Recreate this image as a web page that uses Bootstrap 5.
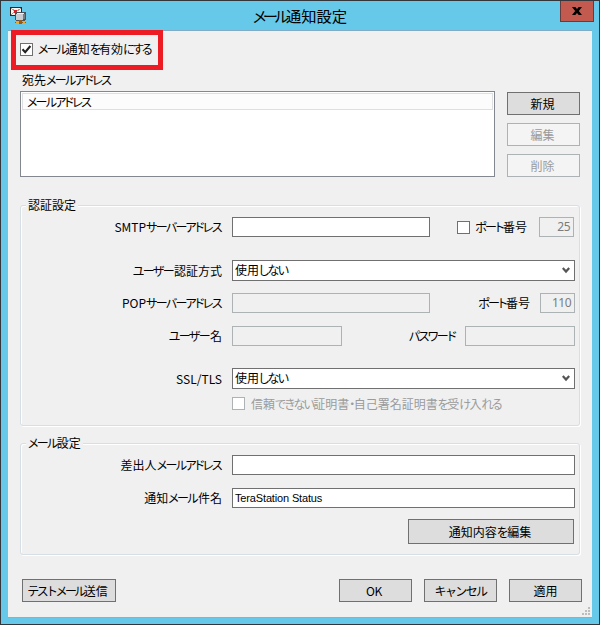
<!DOCTYPE html>
<html lang="ja">
<head>
<meta charset="utf-8">
<meta name="viewport" content="width=device-width, initial-scale=1">
<title>メール通知設定</title>
<link href="https://cdn.jsdelivr.net/npm/bootstrap@5.3.0/dist/css/bootstrap.min.css" rel="stylesheet">
<style>
body{width:600px;height:625px;overflow:hidden;font:12px/16px "Noto Sans CJK JP",sans-serif;color:#000;font-feature-settings:"palt";white-space:nowrap}
.win{width:600px;height:625px;background:#66c9e9;border:1px solid #33363b;padding:0 7px 7px}
.titlebar{height:29px;font-size:15.3px}
.titlebar .kana{letter-spacing:-3.2px}
.title-text{padding-bottom:1px}
.app-icon{left:1px;top:5px}
.close-btn{right:-2px;top:0;width:34px;height:21px;background:#c35a50;border:1px solid #653c3b;border-top:0}
.pane{height:588px;background:#f0f0f0;border-top:1px solid #83abc4;border-bottom:1px solid #83b4c8}
.pane.inner-pane{padding:0 12px}
.kana{letter-spacing:-1.6px}
.hilite{width:152px;height:40px;margin:-1px 0 0 -9px;border:5px solid #ed1c24;padding:0 4px 2px}
.hilite .kana{letter-spacing:-1.9px}
.hilite .cbx-lab{margin-left:5px}
.cbx{width:13px;height:13px;flex:none;margin:0;border:1px solid #707070;background:#fff}
.cbx.off{border-color:#adb2b5}
.cbx-lab{margin-left:6px}
.list-label{margin:2px 0 0 2px;height:19px}
.list-area{width:475px;height:86px;border:1px solid #828790;background:#fff;padding:1px}
.list-head{height:17px;border:1px solid #dedfe1;background:#fcfcfc;padding-left:4px;line-height:15px;letter-spacing:-1.8px}
.side{margin:1px 0 0 12px;gap:8px}
.wbtn{width:73px;height:23px;padding:0;border:1px solid #707070;border-radius:0;background:#ddd;color:#000;font-size:12px;line-height:20px}
.side .wbtn{padding-right:2px}
.wbtn:disabled{border-color:#adb2b5;background:#f4f4f4;color:#9b9b9b;opacity:1}
.grp{width:560px;border:1px solid #d5dfe5;border-radius:3px;box-shadow:inset 1px 1px #fff,1px 1px #fff}
.grp-auth{height:221px;margin-top:28px}
.grp-mail{height:112px;margin-top:17px}
.cap{width:max-content;height:16px;margin:-9px 0 0 5px;padding:0 2px;background:#f0f0f0}
.line{height:20px}
.lab{width:201px;margin-right:10px;text-align:right;flex:none}
.lab .kana:last-child{margin-right:1px}
.box{height:20px;flex:none;border:1px solid #707070;background:#fff;padding:0 3px;line-height:18px}
.box.off{border-color:#adb2b5;background:#f0f0f0;color:#7b7b7b}
.box.combo{height:21px;padding:0 4px 0 2px}
.combo>span{margin-top:-1px}
.w-full{width:343px}.w-host{width:198px}.w-user{width:110px}.w-port{width:35px}
.latin{font-family:"Liberation Sans",sans-serif;font-size:11px;letter-spacing:-.15px}
.box.latin{padding-left:2px}
.num{font-family:"Noto Sans",sans-serif;font-size:12px;text-align:right;letter-spacing:-.5px}
.smtp-port{margin-right:5px}.smtp-port .port-lab{margin:0 12px 0 5px}
.pop-lab{margin-right:10px}
.pass-lab{margin-right:10px}
.r1{margin-top:4px}.r2{margin-top:23px;height:21px}.r3{margin-top:12px}.r4{margin-top:13px}.r5{margin-top:22px;height:21px}.r6{margin:8px 0 0 211px;height:13px;color:#9b9b9b}
.m1{margin-top:4px}.m2{margin-top:13px}
.edit{width:166px;height:25px;margin:11px 0 0 387px;padding-right:2px}
.foot{margin:24px -2px 0 2px}
.foot-gap{gap:12px}
.test-btn{width:94px;padding-right:3px}
.test-btn .kana{letter-spacing:-2.6px}
.ok-btn{padding-right:3px;letter-spacing:-.4px}
.grip{right:1px;bottom:1px}
</style>
</head>
<body>
<div class="win">
  <header class="titlebar position-relative d-flex justify-content-center align-items-center">
    <svg class="app-icon position-absolute" width="19" height="19" viewBox="0 0 19 19" shape-rendering="crispEdges">
      <rect x="1.5" y="1.5" width="11" height="8" fill="#faf4ef" stroke="#30251f"/>
      <path d="M2 2l5 4 5-4M2 9l4-4" fill="none" stroke="#b7978c"/>
      <rect x="5" y="4" width="3" height="3" fill="#d4222a"/>
      <path d="M6 7l2-1h8l1 1v6l-2 2H7l-1-2z" fill="#4d5257"/>
      <path d="M7 8h7v6H7z" fill="#c9cdd1"/><path d="M7 8l2-1h7l-2 1z" fill="#eef0f1"/>
      <path d="M14 8h2v5h-2z" fill="#777e83"/>
      <path d="M10 14h3v2h4v1h-4v1h-3v-1H6v-1h4z" fill="#9c5912"/><path d="M7 16h3v1H7zM14 16h2v1h-2z" fill="#eca626"/>
    </svg>
    <span class="title-text"><span class="kana">メール</span>通知設定</span>
    <div class="close-btn position-absolute d-flex align-items-center justify-content-center">
      <svg width="10" height="8" viewBox="0 0 10 8"><path d="M0 0h3.3L5 2 6.7 0H10L6.8 4 10 8H6.7L5 6 3.3 8H0l3.2-4z" fill="#000"/></svg>
    </div>
  </header>
  <main class="pane inner-pane position-relative">
    <div class="hilite d-flex align-items-center">
      <span class="cbx d-flex"><svg width="11" height="11" viewBox="0 0 11 11"><path d="M1.5 5.2l2.7 3L9.4 2" fill="none" stroke="#222" stroke-width="2.1"/></svg></span>
      <span class="cbx-lab"><span class="kana">メール</span>通知<span class="kana">を</span>有効<span class="kana">にする</span></span>
    </div>
    <div class="list-label">宛先<span class="kana">メールアドレス</span></div>
    <div class="d-flex">
      <div class="list-area"><div class="list-head">メールアドレス</div></div>
      <div class="side d-flex flex-column">
        <button class="btn wbtn">新規</button>
        <button class="btn wbtn" disabled>編集</button>
        <button class="btn wbtn" disabled>削除</button>
      </div>
    </div>
    <section class="grp grp-auth">
      <div class="cap">認証設定</div>
      <div class="line r1 d-flex align-items-center">
        <span class="lab">SMTP<span class="kana">サーバーアドレス</span></span><span class="box w-host"></span>
        <span class="smtp-port d-flex align-items-center ms-auto"><span class="cbx"></span><span class="port-lab"><span class="kana">ポート</span>番号</span><span class="box off num w-port">25</span></span>
      </div>
      <div class="line r2 d-flex align-items-center">
        <span class="lab"><span class="kana">ユーザー</span>認証方式</span>
        <span class="box combo w-full d-flex align-items-center justify-content-between"><span>使用<span class="kana">しない</span></span><svg width="8" height="7" viewBox="0 0 8 7"><path d="M.8 1L4 4.6 7.2 1" fill="none" stroke="#555" stroke-width="2.2"/></svg></span>
      </div>
      <div class="line r3 d-flex align-items-center">
        <span class="lab">POP<span class="kana">サーバーアドレス</span></span><span class="box off w-host"></span>
        <span class="d-flex align-items-center ms-auto me-1"><span class="pop-lab"><span class="kana">ポート</span>番号</span><span class="box off num w-port">110</span></span>
      </div>
      <div class="line r4 d-flex align-items-center">
        <span class="lab"><span class="kana">ユーザー</span>名</span><span class="box off w-user"></span>
        <span class="d-flex align-items-center ms-auto me-1"><span class="kana pass-lab">パスワード</span><span class="box off w-user"></span></span>
      </div>
      <div class="line r5 d-flex align-items-center">
        <span class="lab">SSL/TLS</span>
        <span class="box combo w-full d-flex align-items-center justify-content-between"><span>使用<span class="kana">しない</span></span><svg width="8" height="7" viewBox="0 0 8 7"><path d="M.8 1L4 4.6 7.2 1" fill="none" stroke="#555" stroke-width="2.2"/></svg></span>
      </div>
      <div class="r6 d-flex align-items-center"><span class="cbx off"></span><span class="cbx-lab">信頼<span class="kana">できない</span>証明書<span class="kana">・</span>自己署名証明書<span class="kana">を</span>受<span class="kana">け</span>入<span class="kana">れる</span></span></div>
    </section>
    <section class="grp grp-mail">
      <div class="cap"><span class="kana">メール</span>設定</div>
      <div class="line m1 d-flex align-items-center"><span class="lab">差出人<span class="kana">メールアドレス</span></span><span class="box w-full"></span></div>
      <div class="line m2 d-flex align-items-center"><span class="lab">通知<span class="kana">メール</span>件名</span><span class="box w-full latin">TeraStation Status</span></div>
      <button class="btn wbtn edit d-block">通知内容<span class="kana">を</span>編集</button>
    </section>
    <footer class="foot d-flex">
      <button class="btn wbtn test-btn me-auto"><span class="kana">テストメール</span>送信</button>
      <div class="foot-gap d-flex"><button class="btn wbtn ok-btn">OK</button><button class="btn wbtn"><span class="kana">キャンセル</span></button><button class="btn wbtn">適用</button></div>
    </footer>
    <svg class="grip position-absolute" width="10" height="10" viewBox="0 0 10 10" fill="#bdbdbd" shape-rendering="crispEdges"><path d="M7 1h2v2H7zM4 4h2v2H4zM7 4h2v2H7zM1 7h2v2H1zM4 7h2v2H4zM7 7h2v2H7z"/></svg>
  </main>
</div>
<script src="https://cdn.jsdelivr.net/npm/bootstrap@5.3.0/dist/js/bootstrap.bundle.min.js"></script>
</body>
</html>
